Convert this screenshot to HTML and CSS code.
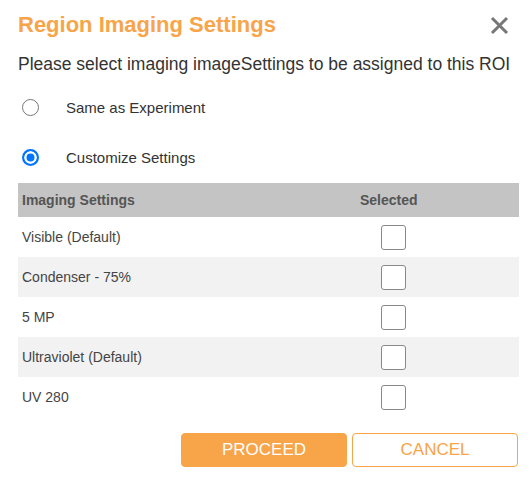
FILE: index.html
```html
<!DOCTYPE html>
<html>
<head>
<meta charset="utf-8">
<link rel="stylesheet" href="styles.css">
</head>
<body>
<div class="dialog">
  <div class="header">
    <h1 class="title">Region Imaging Settings</h1>
    <button class="close" aria-label="Close">
      <svg width="19" height="19" viewBox="0 0 19 19"><path d="M2 2 L17 17 M17 2 L2 17" stroke="#777" stroke-width="3" stroke-linecap="butt"/></svg>
    </button>
  </div>
  <p class="subtitle">Please select imaging imageSettings to be assigned to this ROI</p>
  <div class="radios">
    <label class="radio-row"><input type="radio" name="mode" class="radio"><span>Same as Experiment</span></label>
    <label class="radio-row"><input type="radio" name="mode" class="radio" checked><span>Customize Settings</span></label>
  </div>
  <div class="table">
    <div class="thead">
      <div class="cell">Imaging Settings</div>
      <div class="cell center head-sel">Selected</div>
    </div>
    <div class="row"><div class="cell">Visible (Default)</div><div class="cell center"><span class="box"></span></div></div>
    <div class="row alt"><div class="cell">Condenser - 75%</div><div class="cell center"><span class="box"></span></div></div>
    <div class="row"><div class="cell">5 MP</div><div class="cell center"><span class="box"></span></div></div>
    <div class="row alt"><div class="cell">Ultraviolet (Default)</div><div class="cell center"><span class="box"></span></div></div>
    <div class="row"><div class="cell">UV 280</div><div class="cell center"><span class="box"></span></div></div>
  </div>
  <div class="actions">
    <button class="btn primary">PROCEED</button>
    <button class="btn secondary">CANCEL</button>
  </div>
</div>
</body>
</html>
```

FILE: styles.css
```css
* { box-sizing: border-box; }
html, body { margin: 0; padding: 0; background: #fff; }
body { font-family: "Liberation Sans", Arial, sans-serif; color: #333; }
.dialog { padding: 12px 12px 0 18px; width: 531px; }
.header { display: flex; justify-content: space-between; align-items: center; height: 26px; }
.title { margin: 0; font-size: 22px; line-height: 26px; font-weight: bold; color: #f8a449; }
.close { border: 0; background: none; padding: 0; margin-right: 10px; width: 19px; height: 19px; display: flex; }
.subtitle { margin: 16px 0 0; font-size: 17.5px; line-height: 20px; color: #333; white-space: nowrap; }
.radios { margin-top: 8px; display: flex; flex-direction: column; }
.radio-row { display: flex; align-items: center; height: 50px; font-size: 15px; color: #333; }
.radio { appearance: none; -webkit-appearance: none; margin: 0 27px 0 4px; width: 17px; height: 17px; border-radius: 50%; border: 1px solid #767676; background: #fff; }
.radio:checked { border: 2px solid #0075ff; background: #0075ff; box-shadow: inset 0 0 0 2.5px #fff; }
.table { margin-top: 1px; width: 501px; }
.thead, .row { display: grid; grid-template-columns: 1fr 1fr; align-items: center; }
.thead { height: 34px; background: #c4c4c4; font-size: 14px; font-weight: bold; color: #555; }
.row { height: 40px; font-size: 14px; color: #444; }
.row.alt { background: #f2f2f2; }
.cell { padding-left: 4px; }
.cell.center { padding-left: 0; display: flex; justify-content: center; }
.cell.head-sel { padding-right: 10px; }
.box { display: block; width: 25px; height: 25px; border: 1px solid #888; border-radius: 3px; background: #fff; }
.actions { margin-top: 16px; display: flex; justify-content: flex-end; gap: 5px; padding-right: 1px; }
.btn { width: 166px; height: 34px; border-radius: 4px; font-family: "Liberation Sans", Arial, sans-serif; font-size: 17px; padding: 0; }
.primary { background: #f8a449; border: 1px solid #f8a449; color: #fff; }
.secondary { background: #fff; border: 1px solid #f8a449; color: #f8a449; }
```
